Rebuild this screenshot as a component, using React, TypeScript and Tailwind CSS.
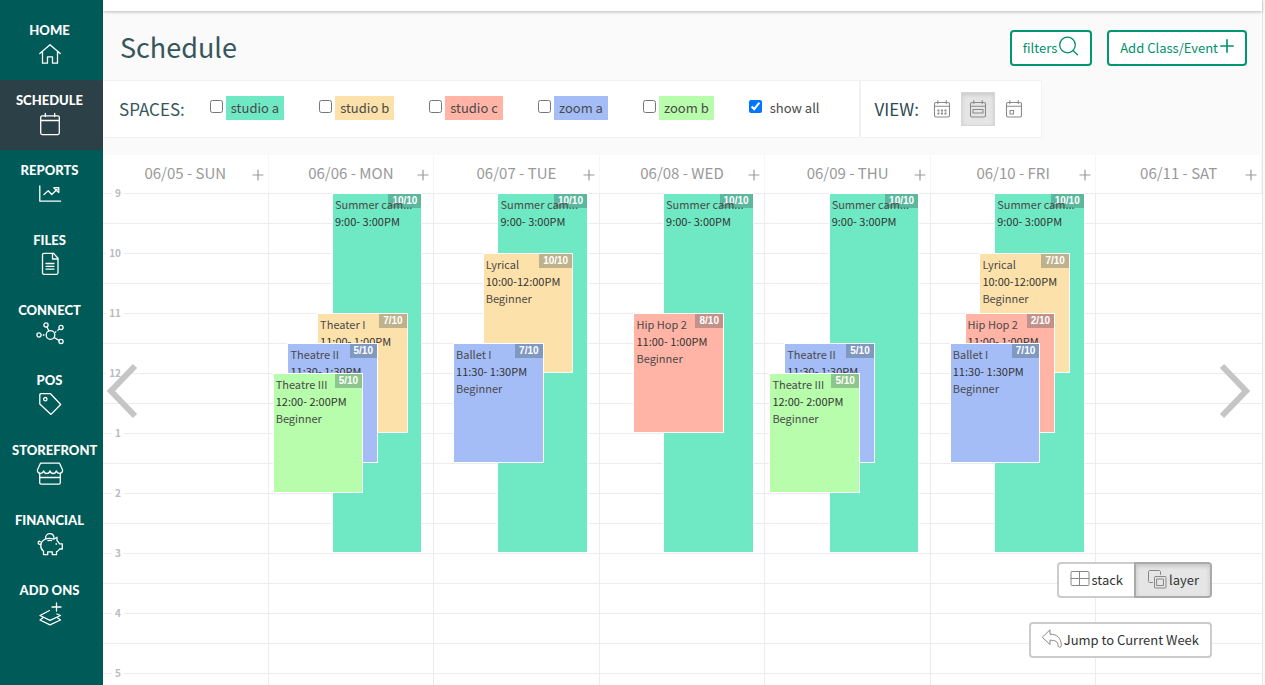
import { useState } from "react";
import type { ReactNode } from "react";
import clsx from "clsx";

type Space = "studio a" | "studio b" | "studio c" | "zoom a" | "zoom b";

type Booking = {
  space: Space;
  name: string;
  time: string;
  level?: string;
  start: number;
  end: number;
  seats: string;
};

const HALF_HOUR = 30;
const FIRST_HOUR = 9;

const spaces: { name: Space; color: string }[] = [
  { name: "studio a", color: "bg-[#6fe8c4]" },
  { name: "studio b", color: "bg-[#fde1ab]" },
  { name: "studio c", color: "bg-[#ffb4a6]" },
  { name: "zoom a", color: "bg-[#a4bdf7]" },
  { name: "zoom b", color: "bg-[#b7fdab]" },
];

const camp: Booking = { space: "studio a", name: "Summer cam...", time: "9:00- 3:00PM", start: 9, end: 15, seats: "10/10" };
const theatre2: Booking = { space: "zoom a", name: "Theatre II", time: "11:30- 1:30PM", level: "Beginner", start: 11.5, end: 13.5, seats: "5/10" };
const theatre3: Booking = { space: "zoom b", name: "Theatre III", time: "12:00- 2:00PM", level: "Beginner", start: 12, end: 14, seats: "5/10" };
const ballet: Booking = { space: "zoom a", name: "Ballet I", time: "11:30- 1:30PM", level: "Beginner", start: 11.5, end: 13.5, seats: "7/10" };
const lyrical: Booking = { space: "studio b", name: "Lyrical", time: "10:00-12:00PM", level: "Beginner", start: 10, end: 12, seats: "10/10" };
const hipHop: Booking = { space: "studio c", name: "Hip Hop 2", time: "11:00- 1:00PM", level: "Beginner", start: 11, end: 13, seats: "8/10" };
const theater1: Booking = { space: "studio b", name: "Theater I", time: "11:00- 1:00PM", level: "Beginner", start: 11, end: 13, seats: "7/10" };

const days: { label: string; bookings: Booking[] }[] = [
  { label: "06/05 - SUN", bookings: [] },
  { label: "06/06 - MON", bookings: [camp, theater1, theatre2, theatre3] },
  { label: "06/07 - TUE", bookings: [camp, lyrical, ballet] },
  { label: "06/08 - WED", bookings: [camp, hipHop] },
  { label: "06/09 - THU", bookings: [camp, theatre2, theatre3] },
  { label: "06/10 - FRI", bookings: [camp, { ...lyrical, seats: "7/10" }, { ...hipHop, seats: "2/10" }, ballet] },
  { label: "06/11 - SAT", bookings: [] },
];

const hours = ["9", "10", "11", "12", "1", "2", "3", "4", "5"];

function Icon({ children, size = 24, width = 1.4, className }: { children: ReactNode; size?: number; width?: number; className?: string }) {
  return (
    <svg
      width={size}
      height={size}
      viewBox={`0 0 ${size} ${size}`}
      fill="none"
      stroke="currentColor"
      strokeWidth={width}
      strokeLinejoin="round"
      strokeLinecap="round"
      aria-hidden="true"
      className={clsx("shrink-0", className)}
    >
      {children}
    </svg>
  );
}

const nav: { label: string; icon: ReactNode }[] = [
  {
    label: "HOME",
    icon: <path d="M1.8 11.6 12 2.7l10.2 8.900M4.500 9.600v11.600h5v-6.400h5v6.400h5V9.600" />,
  },
  {
    label: "SCHEDULE",
    icon: (
      <>
        <rect x="2.7" y="3.8" width="18.6" height="18.8" rx="1.5" />
        <path d="M2.7 8.5h18.6M7.3 1.5v3M16.7 1.5v3" />
      </>
    ),
  },
  {
    label: "REPORTS",
    icon: (
      <>
        <path d="M1.8 3.8v15.4h20.8" />
        <path d="m6 12.5 4.2-3.7 3.5 3.7 5.5-5.2M15.8 5.7h5v4.8l-2-1.8-1.4-1.3z" />
      </>
    ),
  },
  {
    label: "FILES",
    icon: (
      <>
        <path d="M6 1.3h9.5l4.5 5v14.5c0 1-.6 1.5-1.5 1.5H6c-1 0-1.5-.6-1.5-1.5v-18c0-1 .6-1.5 1.5-1.5z" />
        <path d="M14.5 1.5V7h5.3M8 11.5h8M8 14.3h8M8 17.1h8" />
      </>
    ),
  },
  {
    label: "CONNECT",
    icon: (
      <>
        <circle cx="12.5" cy="13" r="4.3" />
        <circle cx="1" cy="13" r="2.1" />
        <circle cx="8" cy="3" r="2.1" />
        <circle cx="23" cy="5.5" r="2.1" />
        <circle cx="23" cy="19.5" r="2.1" />
        <path d="m9 5 1.800 4M16.500 15.700l4.500 2.700M5.200 13H6M17.200 10.200l.7-.5M19.800 8.200l.6-.5" />
      </>
    ),
  },
  {
    label: "POS",
    icon: (
      <>
        <path d="M1.800 3c0-.8.5-1.300 1.300-1.300h9.400L22.700 12.500 13 22.400 1.800 12z" />
        <circle cx="7.3" cy="7.2" r="1.7" />
      </>
    ),
  },
  {
    label: "STOREFRONT",
    icon: (
      <>
        <path d="M2.500 1.200h19l3 6.500c.4 2-.8 3.600-2.900 3.600-1.700 0-2.800-1-3.200-2.500-.5 1.700-1.600 2.700-3.200 2.700s-2.700-1-3.200-2.700c-.5 1.700-1.600 2.700-3.200 2.700s-2.700-1-3.200-2.700c-.4 1.500-1.500 2.500-3.200 2.500-2.100 0-3.300-1.600-2.900-3.600z" />
        <path d="M1.700 11.500v9.200c0 .9.500 1.400 1.400 1.400h17.800c.9 0 1.400-.5 1.400-1.400v-9.200M2 15.500h20" />
      </>
    ),
  },
  {
    label: "FINANCIAL",
    icon: (
      <>
        <path d="M6.500 7.500c3-1.300 6.500-1.300 9.200-.3l3.300-2v3.600c1.300 1 2 1.900 2.400 3h2.900v5.200h-2.700c-.8 1.400-1.800 2.200-3.100 2.900v2.800h-4.200v-2.900h-4.600v2.900H5.500v-3.400C1.800 16.500 1.600 10.500 6.500 7.500z" />
        <path d="M7.500 6.500c0-6.400 8.500-6.400 8.500 0M3 12.200c-2.500.5-3.500-1-2.500-2.500.7-1 1.800-.6 1.700.2M18 12h.6M10 8.700c1.200-.3 2.400-.3 3.500-.1" />
      </>
    ),
  },
  {
    label: "ADD ONS",
    icon: (
      <>
        <path d="M11.500 8.500 2 13.500l10 4.800 10.500-4.800-3.500-1.500" />
        <path d="m5 15.700-3 2.300 10 4.800 10.500-4.800-3-2.300M18.500 1v8M14 5h9" />
      </>
    ),
  },
];

const views: { name: string; mark: ReactNode }[] = [
  {
    name: "Month",
    mark: <path d="M4.500 10.500h2M8 10.500h2M11.500 10.500h2M4.500 13.500h2M8 13.500h2M11.500 13.500h2" strokeWidth="2" strokeLinecap="butt" />,
  },
  { name: "Week", mark: <rect x="4" y="9.5" width="10" height="3.5" /> },
  { name: "Day", mark: <rect x="5" y="10.5" width="3.5" height="3.5" /> },
];

function Sidebar() {
  return (
    <nav className="w-[103px] shrink-0 bg-[#005a57] pt-[10px] font-['Lato',sans-serif] text-white">
      {nav.map((item) => (
        <a
          key={item.label}
          href="#"
          className={clsx("block h-[70px] pt-3 pr-4 pl-3", item.label === "SCHEDULE" && "bg-[#2b4147]")}
        >
          <span className="block text-center text-[13px] leading-4 font-black whitespace-nowrap">{item.label}</span>
          <Icon width={1.3} className="mx-auto mt-1 overflow-visible">{item.icon}</Icon>
        </a>
      ))}
    </nav>
  );
}

function BookingCard({ booking }: { booking: Booking }) {
  const lane = spaces.findIndex((s) => s.name === booking.space);
  return (
    <article
      className={clsx("absolute w-[55%] overflow-hidden border border-white pt-[2px] pl-[2px] text-[11px] leading-[17px] text-[#4a4a4a]", spaces[lane].color)}
      style={{
        left: `${38.5 - lane * 9}%`,
        top: (booking.start - FIRST_HOUR) * 2 * HALF_HOUR,
        height: (booking.end - booking.start) * 2 * HALF_HOUR,
      }}
    >
      <span className="absolute top-0 right-0 bg-[#2f4545]/30 px-1 font-['Liberation_Sans',sans-serif] text-[10px] leading-[14px] font-bold text-white">
        {booking.seats}
      </span>
      <h3 className="relative whitespace-nowrap">{booking.name}</h3>
      <p className="whitespace-nowrap text-[#333]">{booking.time}</p>
      {booking.level && <p>{booking.level}</p>}
    </article>
  );
}

function Calendar() {
  return (
    <section className="relative min-h-0 flex-1 overflow-hidden bg-white">
      <div className="grid grid-cols-7">
        {days.map((day) => (
          <header key={day.label} className="flex h-[38px] items-center border-r border-[#f7f7f7] text-[#999]">
            <h2 className="flex-1 pb-[2px] pl-4 text-center text-[15px] leading-5">{day.label}</h2>
            <button aria-label={`Add to ${day.label}`} className="mr-1 pt-px">
              <Icon size={12} width={1.2}>
                <path d="M6 1v10M1 6h10" />
              </Icon>
            </button>
          </header>
        ))}
      </div>
      <div className="relative">
        {hours.map((hour) => (
          <div key={hour} className="relative">
            <div className="h-[30px] border-t border-[#ececec]" />
            <div className="h-[30px] border-t border-[#ececec]" />
            <span className="absolute -top-2 left-[2px] w-4 text-right text-[10px] leading-4 font-bold text-[#bbb]">
              <span className="-mr-[3px] bg-white px-[3px]">{hour}</span>
            </span>
          </div>
        ))}
        <div className="absolute inset-0 grid grid-cols-7">
          {days.map((day) => (
            <div key={day.label} className="relative border-r border-[#ececec] last:border-r-0">
              {day.bookings.map((b) => (
                <BookingCard key={b.name} booking={b} />
              ))}
            </div>
          ))}
        </div>
      </div>
      <button aria-label="Previous week" className="absolute top-[208px] left-1 text-[#c5c5c5]">
        <svg width="31" height="56" viewBox="0 0 31 56" fill="none" stroke="currentColor" strokeWidth="6">
          <path d="M28 3 4 28l24 25" />
        </svg>
      </button>
      <button aria-label="Next week" className="absolute top-[208px] right-3 text-[#c5c5c5]">
        <svg width="31" height="56" viewBox="0 0 31 56" fill="none" stroke="currentColor" strokeWidth="6">
          <path d="m3 3 24 25L3 53" />
        </svg>
      </button>
    </section>
  );
}

function FloatingControls() {
  const [layout, setLayout] = useState("layer");
  const segment = "flex h-9 items-center gap-[2px] border-2 px-[11px] pb-[2px]";
  const pressed = "border-[#aaa] bg-[#e5e5e5] shadow-[inset_0_2px_4px_rgba(0,0,0,0.15)]";
  return (
    <div className="absolute right-[53px] bottom-[27px] flex flex-col items-end gap-6 text-[13px] leading-5 text-[#333]">
      <div className="flex">
        <button onClick={() => setLayout("stack")} className={clsx(segment, "rounded-l border-r-0", layout === "stack" ? pressed : "border-[#ccc] bg-white")}>
          <Icon size={20} width={1} className="text-[#888]">
            <path d="M2 2.500h16c.6 0 1 .4 1 1v12c0 .6-.4 1-1 1H2c-.6 0-1-.4-1-1v-12c0-.6.4-1 1-1zM9.500 2.500v14M1 9.500h18" />
          </Icon>
          <span className="pt-px">stack</span>
        </button>
        <button onClick={() => setLayout("layer")} className={clsx(segment, "rounded-r", layout === "layer" ? pressed : "border-[#ccc] bg-white")}>
          <Icon size={20} width={1} className="text-[#888]">
            <path d="M5.500 13.500H3c-1 0-1.500-.5-1.500-1.500V3c0-1 .5-1.500 1.500-1.500h9c1 0 1.500.5 1.500 1.500v2.500" />
            <rect x="7.5" y="7.5" width="11.5" height="11.5" rx="1" />
            <rect x="10" y="10" width="6.5" height="6.5" />
          </Icon>
          <span className="pt-px">layer</span>
        </button>
      </div>
      <button className="flex h-9 items-center gap-[2px] rounded border-2 border-[#ccc] bg-white px-[11px] pb-[2px]">
        <Icon size={20} width={1} className="text-[#888]">
          <path d="M.6 8 8 .8v4.400c7 0 11 3.300 11.300 11.300 0 2.300-3.300 2.300-3.300 0 0-3.700-2.500-5.300-8-5.300v4z" />
        </Icon>
        <span className="pt-px">Jump to Current Week</span>
      </button>
    </div>
  );
}

export default function App() {
  const [view, setView] = useState("Week");
  const [checked, setChecked] = useState<string[]>(["show all"]);
  const toggle = (name: string) =>
    setChecked((list) => (list.includes(name) ? list.filter((n) => n !== name) : [...list, name]));

  return (
    <div className="relative flex h-screen overflow-hidden bg-[#fafafa] font-['Noto_Sans_CJK_SC',sans-serif]">
      <Sidebar />
      <main className="mr-[2px] flex min-w-0 flex-1 flex-col border-r border-[#e6e6e6]">
        <div className="h-[11px] shrink-0 bg-white shadow-[0_1px_3px_rgba(0,0,0,0.25)]" />
        <header className="flex h-[69px] shrink-0 items-center justify-between pt-1 pr-[15px] pl-[17px]">
          <h1 className="pb-[2px] text-[27px] leading-10 text-[#36565b]">Schedule</h1>
          <div className="flex gap-[15px] text-[13px] leading-5 text-[#00906b]">
            <button className="flex h-9 items-center rounded border-2 border-[#00966f] bg-white px-[11px]">
              filters
              <Icon size={22} width={1.3} className="-mt-1">
                <circle cx="10.5" cy="10" r="7.8" />
                <path d="m16 15.500 4.500 4.300" />
              </Icon>
            </button>
            <button className="flex h-9 items-center gap-[2px] rounded border-2 border-[#00966f] bg-white px-[11px]">
              Add Class/Event
              <Icon size={14} width={1.6} className="-mt-1">
                <path d="M7 .8v12.400M.8 7h12.400" />
              </Icon>
            </button>
          </div>
        </header>

        <div className="mb-[17px] flex h-[58px] shrink-0 text-[#36565b]">
          <div className="flex items-center border-y border-r border-[#f2f2f2] bg-white pr-[34px] pl-4">
            <h2 className="text-[17px] leading-6">SPACES:</h2>
            <div className="ml-[25px] flex gap-[35px] pb-[2px] text-[13px] leading-6 text-[#4a4a4a]">
              {[...spaces, { name: "show all", color: "" }].map((s) => (
                <label key={s.name} className="flex items-center gap-[3px]">
                  <input
                    type="checkbox"
                    checked={checked.includes(s.name)}
                    onChange={() => toggle(s.name)}
                    className="-mt-1 size-[13px]"
                  />
                  <span className={clsx("px-[5px]", s.color)}>{s.name}</span>
                </label>
              ))}
            </div>
          </div>
          <div className="flex items-center border border-[#f2f2f2] bg-white pr-[10px] pl-[14px]">
            <h2 className="text-[17px] leading-6 text-[#2a4a52]">VIEW:</h2>
            <div className="ml-[6px] flex gap-[2px]">
              {views.map((v) => (
                <button
                  key={v.name}
                  aria-label={v.name}
                  onClick={() => setView(v.name)}
                  className={clsx(
                    "grid size-[34px] place-items-center border text-[#8a8a8a]",
                    view === v.name ? "border-[#d6d6d6] bg-[#e5e5e5] shadow-[inset_0_2px_4px_rgba(0,0,0,0.12)]" : "border-transparent"
                  )}
                >
                  <Icon size={18} width={1.1}>
                    <rect x="1.5" y="2.5" width="15" height="14.5" rx="1.5" />
                    <path d="M1.500 6.300h15M4.800.6v3M13.200.6v3" />
                    {v.mark}
                  </Icon>
                </button>
              ))}
            </div>
          </div>
        </div>

        <Calendar />
      </main>
      <FloatingControls />
    </div>
  );
}
